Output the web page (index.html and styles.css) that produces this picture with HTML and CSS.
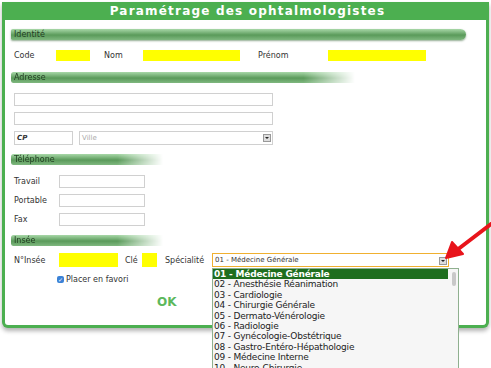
FILE: index.html
```html
<!DOCTYPE html>
<html lang="fr">
<head>
  <meta charset="UTF-8" />
  <title>Paramétrage des ophtalmologistes</title>
  <link rel="stylesheet" href="styles.css">
</head>
<body>
  <div class="window">
    <div class="title">Paramétrage des ophtalmologistes</div>
    <div class="content">
      <div class="section full">Identité</div>
      <div class="row ident">
        <span class="lbl w-code">Code</span>
        <span class="field yellow w34"></span>
        <span class="lbl w-nom">Nom</span>
        <span class="field yellow w97"></span>
        <span class="lbl w-prenom">Prénom</span>
        <span class="field yellow w98"></span>
      </div>

      <div class="section mid">Adresse</div>
      <div class="stack">
        <span class="field w259"></span>
        <span class="field w259"></span>
        <div class="row">
          <span class="field w59 cp">CP</span>
          <span class="field select w194">Ville<span class="drop"></span></span>
        </div>
      </div>

      <div class="section short">Téléphone</div>
      <div class="stack phone">
        <div class="row"><span class="lbl w45">Travail</span><span class="field w86"></span></div>
        <div class="row"><span class="lbl w45">Portable</span><span class="field w86"></span></div>
        <div class="row"><span class="lbl w45">Fax</span><span class="field w86"></span></div>
      </div>

      <div class="section short">Insée</div>
      <div class="row insee">
        <span class="lbl w45">N°Insée</span>
        <span class="field yellow w59 tall"></span>
        <span class="lbl w-cle">Clé</span>
        <span class="field yellow w15 tall"></span>
        <span class="lbl w-spec">Spécialité</span>
        <span class="field select spec">01 - Médecine Générale<span class="drop"></span></span>
      </div>
      <label class="fav"><span class="check">✓</span>Placer en favori</label>
      <div class="ok">OK</div>
    </div>
  </div>

  <ul class="options">
    <li class="on">01 - Médecine Générale</li>
    <li>02 - Anesthésie Réanimation</li>
    <li>03 - Cardiologie</li>
    <li>04 - Chirurgie Générale</li>
    <li>05 - Dermato-Vénérologie</li>
    <li>06 - Radiologie</li>
    <li>07 - Gynécologie-Obstétrique</li>
    <li>08 - Gastro-Entéro-Hépathologie</li>
    <li>09 - Médecine Interne</li>
    <li>10 - Neuro-Chirurgie</li>
  </ul>
  <div class="thumb"></div>

  <svg class="arrow" width="50" height="40" viewBox="0 0 50 40">
    <path d="M48 2 L14 28" stroke="#e8141b" stroke-width="4" stroke-linecap="round" fill="none"/>
    <path d="M3 36 L9 20 L20 32 Z" fill="#e8141b" stroke="#e8141b" stroke-width="2" stroke-linejoin="round"/>
  </svg>
</body>
</html>
```

FILE: styles.css
```css
body {
  margin: 0;
  width: 491px;
  height: 368px;
  overflow: hidden;
  background: #fff;
  font-family: "DejaVu Sans", Verdana, sans-serif;
  position: relative;
}
.window {
  margin: 2px 0 0 2px;
  width: 481px;
  height: 323px;
  border: 3px solid #4caf50;
  border-top: none;
  border-radius: 0 0 6px 6px;
  box-shadow: 0 3px 4px rgba(0, 0, 0, 0.3);
  background: #fff;
}
.title {
  background: #4caf50;
  color: #fff;
  height: 18px;
  line-height: 18px;
  font-weight: bold;
  font-size: 12px;
  letter-spacing: 1.2px;
  text-align: center;
  margin: 0 -3px;
  padding-left: 4px;
}
.content {
  padding: 9px 0 0 6px;
}
.section {
  height: 11px;
  line-height: 11px;
  font-size: 8px;
  color: #243f24;
  padding-left: 3px;
  border-radius: 2px 6px 6px 2px;
  background: linear-gradient(#a8d8a8, #5a9a5a 55%, #7fb87f);
  box-shadow: 0 1px 2px rgba(40, 90, 40, 0.5);
}
.section.full {
  width: 452px;
}
.section.mid {
  width: 341px;
  margin-top: 11px;
  -webkit-mask-image: linear-gradient(90deg, #000 85%, transparent);
  mask-image: linear-gradient(90deg, #000 85%, transparent);
  border-radius: 2px 0 0 2px;
}
.section.short {
  width: 149px;
  margin-top: 9px;
  -webkit-mask-image: linear-gradient(90deg, #000 70%, transparent);
  mask-image: linear-gradient(90deg, #000 70%, transparent);
  border-radius: 2px 0 0 2px;
}
.row {
  display: flex;
  align-items: center;
}
.lbl {
  font-size: 8px;
  color: #333;
  padding-left: 3px;
  flex: none;
}
.field {
  display: block;
  height: 13px;
  box-sizing: border-box;
  border: 1px solid #d0d0d0;
  background: #fff;
  flex: none;
  position: relative;
}
.field.yellow {
  background: #ffff00;
  border: none;
  height: 11px;
}
.field.tall {
  height: 14px;
}
.ident {
  margin-top: 10px;
}
.w-code { width: 42px; }
.w-nom { width: 39px; margin-left: 11px; }
.w-prenom { width: 70px; margin-left: 15px; }
.w34 { width: 34px; }
.w97 { width: 97px; }
.w98 { width: 98px; }
.w259 { width: 259px; }
.w59 { width: 59px; }
.w194 { width: 194px; }
.w86 { width: 86px; }
.w45 { width: 42px; }
.w15 { width: 15px; }
.w-cle { width: 17px; margin-left: 4px; }
.w-spec { width: 44px; margin-left: 5px; }
.stack {
  display: flex;
  flex-direction: column;
  gap: 6px;
  margin: 10px 0 0 3px;
}
.stack .row {
  gap: 6px;
}
.stack .row .field {
  height: 14px;
}
.cp {
  font-size: 7px;
  font-style: italic;
  font-weight: bold;
  color: #333;
  line-height: 12px;
  padding-left: 2px;
}
.select {
  font-size: 7px;
  color: #aaa;
  line-height: 12px;
  padding-left: 2px;
}
.drop {
  position: absolute;
  right: 1px;
  top: 2px;
  width: 8px;
  height: 8px;
  background: #ddd;
  border: 1px solid #999;
  box-sizing: border-box;
}
.drop::after {
  content: "";
  position: absolute;
  left: 1px;
  top: 2px;
  border: 2px solid transparent;
  border-top: 2px solid #222;
}
.phone {
  margin-left: 0;
  gap: 6px;
}
.phone .row {
  gap: 0;
}
.phone .row .field {
  height: 13px;
}
.phone .lbl {
  width: 45px;
  padding-left: 3px;
}
.insee {
  margin-top: 7px;
}
.insee .lbl:first-child {
  width: 45px;
}
.spec {
  width: 237px;
  height: 14px;
  border: 1px solid #f0b030;
  color: #333;
  margin-left: 3px;
}
.spec .drop {
  top: 3px;
}
.fav {
  display: flex;
  align-items: center;
  gap: 2px;
  margin: 8px 0 0 46px;
  font-size: 8px;
  color: #333;
}
.check {
  width: 7px;
  height: 7px;
  border-radius: 2px;
  background: #3b82d6;
  color: #fff;
  font-size: 6px;
  line-height: 7px;
  text-align: center;
}
.ok {
  margin: 11px 0 0 146px;
  font-size: 12px;
  font-weight: bold;
  color: #5cb85c;
}
.options {
  position: absolute;
  left: 212px;
  top: 268px;
  width: 247px;
  height: 110px;
  margin: 0;
  padding: 0 10px 0 0;
  box-sizing: border-box;
  list-style: none;
  background: #f6f6f6;
  border: 1px solid #8fb08f;
  font-size: 9px;
  letter-spacing: -0.2px;
  color: #222;
  overflow: hidden;
}
.options li {
  height: 10.4px;
  line-height: 10.4px;
  padding-left: 1px;
  white-space: nowrap;
}
.options li.on {
  background: #1e6e1e;
  color: #fff;
  font-weight: bold;
}
.thumb {
  position: absolute;
  left: 452px;
  top: 272px;
  width: 4px;
  height: 14px;
  border-radius: 2px;
  background: #c8c8c8;
}
.arrow {
  position: absolute;
  left: 443px;
  top: 222px;
}
```
